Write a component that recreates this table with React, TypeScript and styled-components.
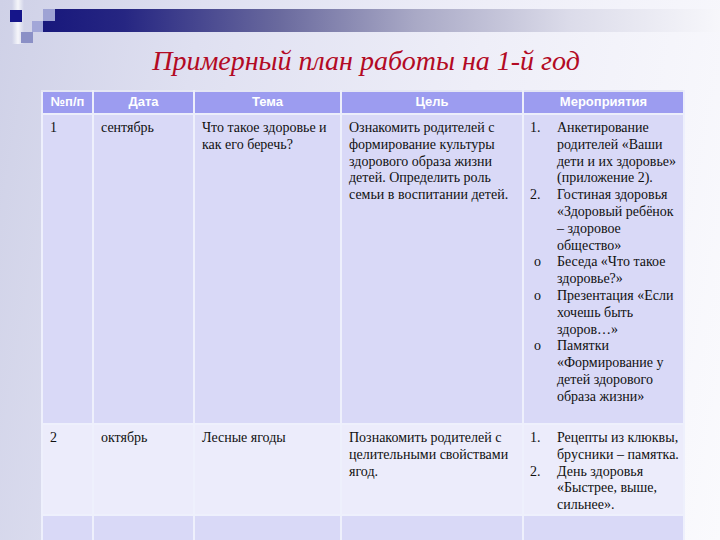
import { createGlobalStyle, styled } from "styled-components";

const GlobalStyle = createGlobalStyle`
  html, body {
    margin: 0;
    padding: 0;
  }
  body {
    width: 720px;
    height: 540px;
    overflow: hidden;
  }
`;

const Slide = styled.div`
  width: 720px;
  height: 540px;
  overflow: hidden;
  display: flex;
  flex-direction: column;
  background: linear-gradient(100deg, #cfd1e7 0%, #dfe0f1 25%, #eeeef8 60%, #fafafd 100%);
`;

const Ornament = styled.svg`
  display: block;
  flex-shrink: 0;
`;

const Title = styled.h1`
  margin: 0 0 0 41px;
  width: 642px;
  padding: 0 0 0 8px;
  box-sizing: border-box;
  height: 46px;
  line-height: 34px;
  text-align: center;
  font-family: "Liberation Serif", "Times New Roman", serif;
  font-style: italic;
  font-weight: normal;
  font-size: 28px;
  color: #b30a24;
  flex-shrink: 0;
`;

const Table = styled.table`
  margin-left: 41px;
  width: 642px;
  table-layout: fixed;
  border-collapse: collapse;
  font-family: "Liberation Serif", "Times New Roman", serif;
  font-size: 14px;
  line-height: 16.8px;
  color: #111;
`;

const HeadCell = styled.th`
  height: 21px;
  padding: 0;
  background: #9c9cf0;
  color: #ffffff;
  font-family: "Liberation Sans", Arial, sans-serif;
  font-weight: bold;
  font-size: 13px;
  text-align: center;
  vertical-align: middle;
  border: 2px solid #eceefb;
  border-top-color: #e4e6f4;
`;

const Row = styled.tr<{ $tone: "dark" | "light"; $h: number }>`
  height: ${(p) => p.$h}px;
  background: ${(p) => (p.$tone === "dark" ? "#d9d9f7" : "#ececfb")};
`;

const Cell = styled.td`
  padding: 5px 2px 0 7px;
  vertical-align: top;
  border: 2px solid #eef0fc;
`;

const List = styled.ul`
  list-style: none;
  margin: 0 0 0 -1px;
  padding: 0;
`;

const Item = styled.li`
  display: flex;
`;

const Marker = styled.span<{ $circle?: boolean }>`
  width: 27px;
  flex-shrink: 0;
  padding-left: ${(p) => (p.$circle ? "4px" : "0")};
  box-sizing: border-box;
`;

const Cols = [51, 101, 147, 182, 161];

type Act = { mark: string; circle?: boolean; text: string };

const rows: { n: string; month: string; topic: string; goal: string; acts: Act[]; h: number; tone: "dark" | "light" }[] = [
  {
    n: "1",
    month: "сентябрь",
    topic: "Что такое здоровье и как его беречь?",
    goal: "Ознакомить родителей с формирование культуры здорового образа жизни детей. Определить роль семьи в воспитании детей.",
    acts: [
      { mark: "1.", text: "Анкетирование родителей «Ваши дети и их здоровье» (приложение 2)." },
      { mark: "2.", text: "Гостиная здоровья «Здоровый ребёнок – здоровое общество»" },
      { mark: "o", circle: true, text: "Беседа «Что такое здоровье?»" },
      { mark: "o", circle: true, text: "Презентация «Если хочешь быть здоров…»" },
      { mark: "o", circle: true, text: "Памятки «Формирование у детей здорового образа жизни»" },
    ],
    h: 310,
    tone: "dark",
  },
  {
    n: "2",
    month: "октябрь",
    topic: "Лесные ягоды",
    goal: "Познакомить родителей с целительными свойствами ягод.",
    acts: [
      { mark: "1.", text: "Рецепты из клюквы, брусники – памятка." },
      { mark: "2.", text: "День здоровья «Быстрее, выше, сильнее»." },
    ],
    h: 91,
    tone: "light",
  },
];

export default function App() {
  return (
    <Slide>
      <GlobalStyle />
      <Ornament width="720" height="44" viewBox="0 0 720 44">
        <defs>
          <linearGradient id="bar" x1="0" y1="0" x2="1" y2="0">
            <stop offset="0" stopColor="#18187c" />
            <stop offset="0.12" stopColor="#262682" />
            <stop offset="0.35" stopColor="#6a6a9e" />
            <stop offset="0.55" stopColor="#a9a9c6" />
            <stop offset="0.78" stopColor="#dcdcea" />
            <stop offset="1" stopColor="#f7f7fb" />
          </linearGradient>
          <linearGradient id="glow" x1="0" y1="0" x2="1" y2="0">
            <stop offset="0" stopColor="#ffffff" stopOpacity="0" />
            <stop offset="0.5" stopColor="#ffffff" stopOpacity="0.8" />
            <stop offset="1" stopColor="#ffffff" stopOpacity="0" />
          </linearGradient>
        </defs>
        <rect x="12" y="0" width="12" height="44" fill="url(#glow)" />
        <rect x="10" y="10" width="12" height="12" fill="#15158a" />
        <rect x="21" y="32" width="12" height="11" fill="#8b90c6" />
        <rect x="32" y="21" width="11" height="11" fill="#a2a7d8" />
        <rect x="43" y="9" width="677" height="23" fill="url(#bar)" />
        <rect x="43" y="9" width="12" height="12" fill="#9ea3d4" />
      </Ornament>
      <Title>Примерный план работы на 1-й год</Title>
      <Table>
        <colgroup>
          {Cols.map((w, i) => (
            <col key={i} style={{ width: w }} />
          ))}
        </colgroup>
        <thead>
          <tr>
            <HeadCell>№п/п</HeadCell>
            <HeadCell>Дата</HeadCell>
            <HeadCell>Тема</HeadCell>
            <HeadCell>Цель</HeadCell>
            <HeadCell>Мероприятия</HeadCell>
          </tr>
        </thead>
        <tbody>
          {rows.map((r) => (
            <Row key={r.n} $tone={r.tone} $h={r.h}>
              <Cell>{r.n}</Cell>
              <Cell>{r.month}</Cell>
              <Cell>{r.topic}</Cell>
              <Cell>{r.goal}</Cell>
              <Cell>
                <List>
                  {r.acts.map((a, i) => (
                    <Item key={i}>
                      <Marker $circle={a.circle}>{a.mark}</Marker>
                      <span>{a.text}</span>
                    </Item>
                  ))}
                </List>
              </Cell>
            </Row>
          ))}
          <Row $tone="dark" $h={40}>
            <Cell />
            <Cell />
            <Cell />
            <Cell />
            <Cell />
          </Row>
        </tbody>
      </Table>
    </Slide>
  );
}
